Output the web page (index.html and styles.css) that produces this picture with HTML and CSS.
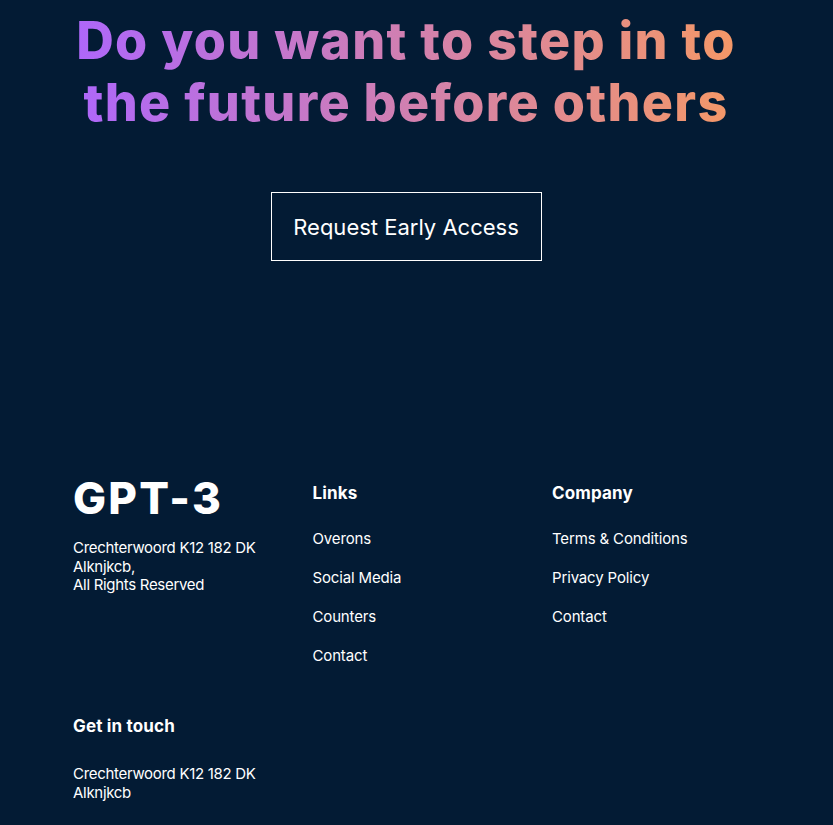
FILE: index.html
```html
<!DOCTYPE html>
<html lang="en">
<head>
<meta charset="utf-8">
<title>GPT-3 Footer</title>
<link rel="stylesheet" href="styles.css">
</head>
<body>
<div class="page">
  <section class="cta">
    <h1 class="cta-title">Do you want to step in to<br>the future before others</h1>
    <button class="cta-btn" type="button">Request Early Access</button>
  </section>
  <footer class="footer">
    <div class="col">
      <p class="logo">GPT-3</p>
      <p class="addr addr-logo">Crechterwoord K12 182 DK<br>Alknjkcb,<br>All Rights Reserved</p>
    </div>
    <div class="col">
      <h4 class="col-title">Links</h4>
      <ul class="link-list">
        <li>Overons</li>
        <li>Social Media</li>
        <li>Counters</li>
        <li>Contact</li>
      </ul>
    </div>
    <div class="col">
      <h4 class="col-title">Company</h4>
      <ul class="link-list">
        <li>Terms &amp; Conditions</li>
        <li>Privacy Policy</li>
        <li>Contact</li>
      </ul>
    </div>
    <div class="col">
      <h4 class="col-title">Get in touch</h4>
      <p class="addr addr-touch">Crechterwoord K12 182 DK<br>Alknjkcb</p>
    </div>
  </footer>
</div>
</body>
</html>
```

FILE: styles.css
```css
* {
  box-sizing: border-box;
}

html, body {
  margin: 0;
  padding: 0;
  background: #031B34;
}

body {
  font-family: Inter, "Noto Sans", sans-serif;
  color: #ffffff;
  min-height: 825px;
}

.page {
  width: 812px;
  display: flex;
  flex-direction: column;
}

.cta {
  display: flex;
  flex-direction: column;
  align-items: center;
}

.cta-title {
  display: inline-block;
  margin: 10px 0 0;
  font-size: 52px;
  line-height: 62px;
  font-weight: 800;
  letter-spacing: 0.025em;
  text-align: center;
  background: linear-gradient(90deg, #AE67FA 0%, #F49867 100%);
  -webkit-background-clip: text;
  background-clip: text;
  color: transparent;
}

.cta-btn {
  margin-top: 58px;
  width: 271px;
  height: 69px;
  background: transparent;
  border: 1px solid #ffffff;
  color: #ffffff;
  font-family: Inter, "Noto Sans", sans-serif;
  font-size: 22px;
  font-weight: 400;
  padding: 0;
  cursor: pointer;
}

.footer {
  margin-top: 220px;
  padding-left: 73px;
  display: grid;
  grid-template-columns: repeat(3, 239.5px);
  row-gap: 49px;
  align-items: start;
}

.col {
  display: flex;
  flex-direction: column;
}

.logo {
  margin: 0;
  font-size: 44px;
  line-height: 34px;
  font-weight: 800;
  letter-spacing: 0.05em;
}

.addr {
  margin: 0;
  font-size: 15px;
  line-height: 18.5px;
  letter-spacing: -0.02em;
}

.addr-logo {
  margin-top: 24px;
}

.addr-touch {
  margin-top: 27px;
}

.col-title {
  margin: 0;
  font-size: 17px;
  line-height: 24px;
  font-weight: 700;
  letter-spacing: 0.01em;
}

.link-list {
  list-style: none;
  margin: 24px 0 0;
  padding: 0;
  display: flex;
  flex-direction: column;
  gap: 20px;
}

.link-list li {
  font-size: 15px;
  line-height: 19px;
  letter-spacing: -0.01em;
  cursor: pointer;
}
```
